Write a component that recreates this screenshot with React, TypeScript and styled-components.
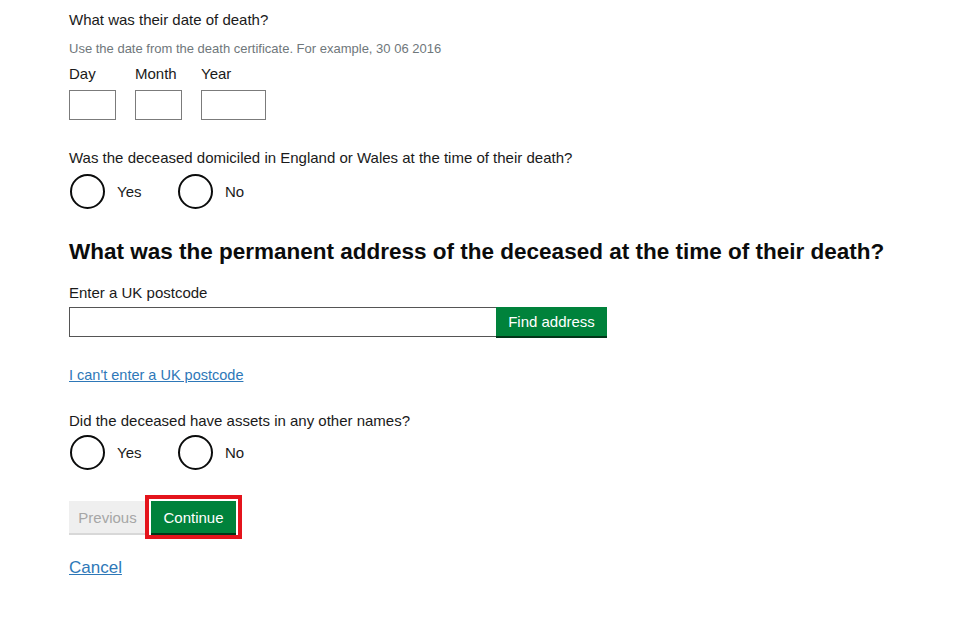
import React from "react";
import styled, { createGlobalStyle } from "styled-components";

const Global = createGlobalStyle`
  html, body { margin: 0; padding: 0; background: #ffffff; }
  body { font-family: "Liberation Sans", Arial, sans-serif; color: #0b0c0c; }
  * { box-sizing: border-box; }
`;

const Page = styled.main`
  display: flex;
  flex-direction: column;
  align-items: flex-start;
  padding: 10px 0 0 69px;
  width: 960px;
  height: 640px;
  overflow: hidden;
`;

const Question = styled.div<{ $mt?: number }>`
  font-size: 15px;
  line-height: 20px;
  color: #1a1a1a;
  margin-top: ${(p) => p.$mt ?? 0}px;
`;

const Hint = styled.div`
  font-size: 13px;
  line-height: 18px;
  color: #6f777b;
  margin-top: 10px;
`;

const DateRow = styled.div`
  display: flex;
  gap: 19px;
  margin-top: 6px;
`;

const DateField = styled.div`
  display: flex;
  flex-direction: column;
  gap: 6px;
`;

const DateLabel = styled.label`
  font-size: 15px;
  line-height: 20px;
  color: #1a1a1a;
`;

const DateBox = styled.div<{ $w: number }>`
  width: ${(p) => p.$w}px;
  height: 30px;
  border: 1.5px solid #7b7b7b;
  background: #fff;
`;

const RadioRow = styled.div<{ $mt: number }>`
  display: flex;
  align-items: center;
  margin-top: ${(p) => p.$mt}px;
  margin-left: 1px;
`;

const RadioItem = styled.label`
  display: flex;
  align-items: center;
  width: 108px;
  font-size: 15px;
  color: #1a1a1a;
`;

const Circle = styled.span`
  width: 35px;
  height: 35px;
  border: 2px solid #0b0c0c;
  border-radius: 50%;
  margin-right: 12px;
  flex: none;
`;

const Heading = styled.h2`
  margin: 29px 0 0;
  font-size: 22.5px;
  line-height: 28px;
  font-weight: 700;
  color: #0b0c0c;
`;

const PostcodeRow = styled.div`
  display: flex;
  margin-top: 4px;
`;

const PostcodeInput = styled.div`
  width: 427px;
  height: 30px;
  border: 1.5px solid #555;
  border-right: none;
  background: #fff;
`;

const GreenButton = styled.button`
  height: 32px;
  margin: 0;
  padding: 0 13px;
  border: none;
  background: #00823b;
  color: #fff;
  font-family: "Liberation Sans", Arial, sans-serif;
  font-size: 15px;
  white-space: nowrap;
  box-shadow: 0 2px 0 #003618;
`;

const FindButton = styled(GreenButton)`
  height: 29px;
  width: 111px;
  padding: 0;
`;

const TextLink = styled.a<{ $size: number; $mt: number }>`
  font-size: ${(p) => p.$size}px;
  line-height: 20px;
  color: #2e78b8;
  text-decoration: underline;
  margin-top: ${(p) => p.$mt}px;
`;

const ButtonRow = styled.div`
  display: flex;
  gap: 5px;
  margin-top: 31px;
`;

const GreyButton = styled.button`
  width: 77px;
  height: 32px;
  margin: 0;
  padding: 0;
  border: none;
  background: #efefef;
  color: #a6a6a6;
  font-family: "Liberation Sans", Arial, sans-serif;
  font-size: 15px;
  white-space: nowrap;
  box-shadow: 0 2px 0 #d8d8d8;
`;

const ContinueButton = styled(GreenButton)`
  width: 85px;
  padding: 0;
  outline: 4px solid #e4141c;
  outline-offset: 2px;
`;

export default function App() {
  return (
    <>
      <Global />
      <Page>
        <Question>What was their date of death?</Question>
        <Hint>Use the date from the death certificate. For example, 30 06 2016</Hint>
        <DateRow>
          <DateField>
            <DateLabel>Day</DateLabel>
            <DateBox $w={47} />
          </DateField>
          <DateField>
            <DateLabel>Month</DateLabel>
            <DateBox $w={47} />
          </DateField>
          <DateField>
            <DateLabel>Year</DateLabel>
            <DateBox $w={65} />
          </DateField>
        </DateRow>

        <Question $mt={28}>Was the deceased domiciled in England or Wales at the time of their death?</Question>
        <RadioRow $mt={6}>
          <RadioItem><Circle />Yes</RadioItem>
          <RadioItem><Circle />No</RadioItem>
        </RadioRow>

        <Heading>What was the permanent address of the deceased at the time of their death?</Heading>
        <Question $mt={17}>Enter a UK postcode</Question>
        <PostcodeRow>
          <PostcodeInput />
          <FindButton>Find address</FindButton>
        </PostcodeRow>

        <TextLink href="#" $size={14.5} $mt={28}>I can't enter a UK postcode</TextLink>

        <Question $mt={26}>Did the deceased have assets in any other names?</Question>
        <RadioRow $mt={4}>
          <RadioItem><Circle />Yes</RadioItem>
          <RadioItem><Circle />No</RadioItem>
        </RadioRow>

        <ButtonRow>
          <GreyButton>Previous</GreyButton>
          <ContinueButton>Continue</ContinueButton>
        </ButtonRow>

        <TextLink href="#" $size={17} $mt={25}>Cancel</TextLink>
      </Page>
    </>
  );
}
